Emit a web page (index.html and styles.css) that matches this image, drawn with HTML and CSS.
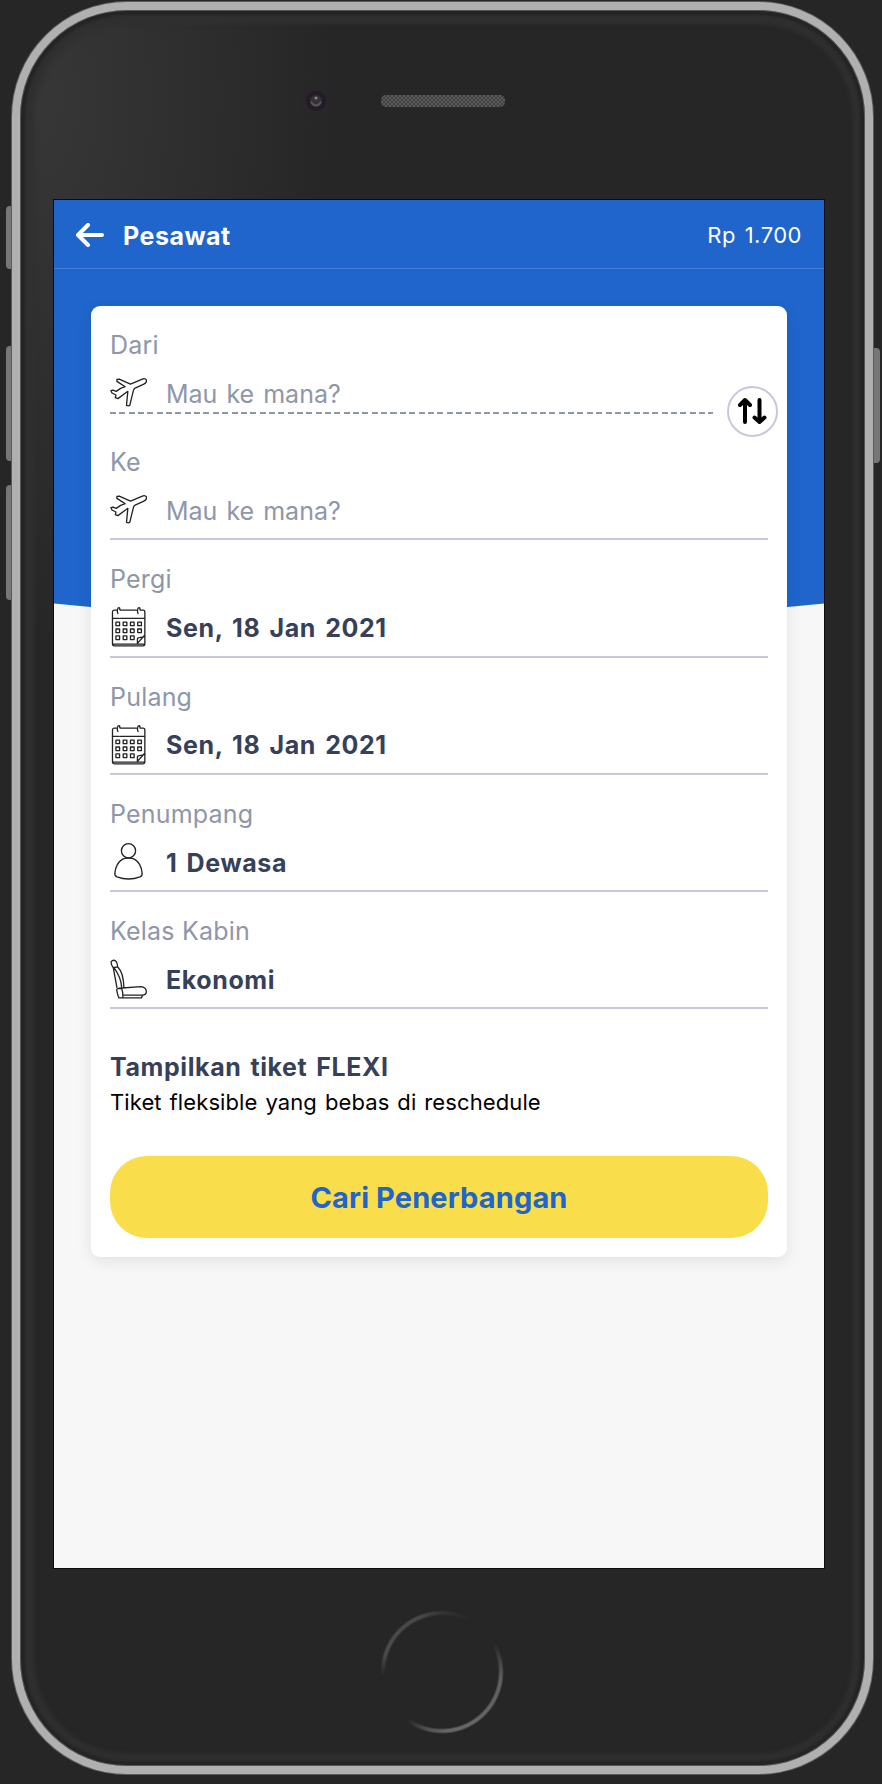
FILE: index.html
```html
<!DOCTYPE html>
<html lang="id">
<head>
<meta charset="utf-8">
<title>Pesawat</title>
<link rel="stylesheet" href="styles.css">
</head>
<body>
<svg class="symbols" aria-hidden="true">
  <symbol id="plane" viewBox="59 181 112 114">
    <path d="M157 199C164 196 170 199 169.500 205C169 210 165 213 160 215L135 226Q131 229 130 233L119 278Q114 282 109 278L113 236L83 258L75 255L77 247L65 241L62 234L68 232L78 236L91 227L105 222L80 206L80 200L87 199L121 214Z"/>
  </symbol>
  <symbol id="calendar" viewBox="59 532 112 120">
    <path d="M79 541H71Q66.500 541 66.500 547V643Q66.500 649 72 649H159Q164.500 649 164.500 643V547Q164.500 541 159 541H151M91 541H139M66 566H87M91 566H165M67 644H140L164 617M142 643V629Q142 624 148 624L161 622M140 644H164M83 551Q80 545 82 538Q83 533 88 534L89 540M144 551Q141 545 143 538Q144 533 149 534L150 540"/>
    <path d="M77 577h11v11h-11zM99 577h11v11h-11zM121 577h11v11h-11zM143 577h11v11h-11zM77 598h11v11h-11zM99 598h11v11h-11zM121 598h11v11h-11zM143 598h11v11h-11zM77 619h11v11h-11zM99 619h11v11h-11zM121 619h11v11h-11z"/>
  </symbol>
  <symbol id="person" viewBox="59 458 112 116">
    <circle cx="115" cy="482" r="21.500"/>
    <path d="M74 548Q77 520 96 508Q102 504 115 504Q128 504 134 508Q153 520 156 548Q158 557 150 561Q115 574 80 561Q72 557 74 548Z"/>
  </symbol>
  <symbol id="seat" viewBox="59 806 112 118">
    <path d="M62 813Q69 805 77 811Q82 818 82 828L69 831Q62 822 62 813ZM69 831L80 890M82 828Q100 846 101 890M72 832Q92 860 94 888M86 893L152 888Q169 890 169 903Q169 914 156 914H98M82 894H94Q98 900 98 922H86Q82 915 80 902Q78 895 82 894ZM86 922H154L158 914"/>
  </symbol>
</svg>

<div class="phone">
  <span class="side-button mute"></span>
  <span class="side-button volume-up"></span>
  <span class="side-button volume-down"></span>
  <span class="side-button power"></span>

  <div class="bezel-top">
    <svg class="camera" viewBox="0 0 40 40"><circle cx="20" cy="20" r="15" fill="#29252b"/><circle cx="20" cy="20" r="10" fill="#211d24"/><circle cx="20" cy="20" r="6" fill="#353237"/><circle cx="20" cy="17" r="1.500" fill="#888"/><path d="M15 21Q20 28 25 21" fill="none" stroke="#59565b" stroke-width="2"/></svg>
    <span class="speaker"></span>
  </div>

  <main class="screen">
    <header class="app-bar">
      <svg class="back" viewBox="0 0 28 24"><path d="M12 2L2 12L12 22M2.500 12H26"/></svg>
      <h1>Pesawat</h1>
      <span class="balance">Rp 1.700</span>
    </header>
    <form class="card">
      <div class="field from">
        <span class="label">Dari</span>
        <div class="value placeholder"><svg class="icon plane"><use href="#plane"/></svg><span>Mau ke mana?</span></div>
      </div>
      <button class="swap" type="button" aria-label="Tukar"><svg viewBox="0 0 30 28"><path d="M8 25V3M3 8L8 3L13 8M22.500 3V25M17.500 20.500L22.500 25L27.500 20.500"/></svg></button>
      <div class="field">
        <span class="label">Ke</span>
        <div class="value placeholder"><svg class="icon plane"><use href="#plane"/></svg><span>Mau ke mana?</span></div>
      </div>
      <div class="field">
        <span class="label">Pergi</span>
        <div class="value"><svg class="icon"><use href="#calendar"/></svg><span>Sen, 18 Jan 2021</span></div>
      </div>
      <div class="field">
        <span class="label">Pulang</span>
        <div class="value"><svg class="icon"><use href="#calendar"/></svg><span>Sen, 18 Jan 2021</span></div>
      </div>
      <div class="field">
        <span class="label">Penumpang</span>
        <div class="value"><svg class="icon"><use href="#person"/></svg><span>1 Dewasa</span></div>
      </div>
      <div class="field">
        <span class="label">Kelas Kabin</span>
        <div class="value"><svg class="icon"><use href="#seat"/></svg><span>Ekonomi</span></div>
      </div>
      <div class="flexi">
        <strong>Tampilkan tiket FLEXI</strong>
        <p>Tiket fleksible yang bebas di reschedule</p>
      </div>
      <button class="submit" type="button">Cari Penerbangan</button>
    </form>
  </main>
  <div class="bezel-bottom"><span class="home"></span></div>
</div>
</body>
</html>
```
FILE: styles.css
```css
* { box-sizing: border-box; }
body {
  margin: 0;
  height: 1784px;
  padding: 2px 0 0 12px;
  background: #262626;
  overflow: hidden;
  font-family: Inter, "Liberation Sans", sans-serif;
}
.symbols { position: absolute; width: 0; height: 0; }

/* Device */
.phone {
  position: relative;
  width: 861px;
  height: 1772px;
  border: 8px solid #b0b0b0;
  border-radius: 115px;
  padding-left: 34px;
  background:
    radial-gradient(ellipse 300px 560px at 15px 90px, #373737, rgba(38, 38, 38, 0)),
    #262626;
  box-shadow: inset 0 0 0 1px #555, inset 0 0 3px 5px #242424, inset 1px 1px 5px 13px #303030, 0 0 0 1px #5a5a5a;
}
.side-button {
  position: absolute;
  left: -14px;
  width: 6px;
  background: #777;
  border-radius: 4px 0 0 4px;
  z-index: -1;
}
.mute { top: 196px; height: 63px; }
.volume-up { top: 336px; height: 115px; }
.volume-down { top: 475px; height: 115px; }
.power { left: auto; right: -15px; top: 338px; height: 115px; border-radius: 0 4px 4px 0; }
.bezel-top { height: 190px; display: flex; padding: 71px 0 0 242px; }
.camera { width: 40px; height: 40px; }
.speaker {
  width: 124px;
  height: 12px;
  margin: 14px 0 0 45px;
  border-radius: 5px;
  background: repeating-conic-gradient(#5c5c5c 0 25%, #404040 0 50%) 0 0 / 4px 4px;
}
.bezel-bottom { padding: 42px 0 0 326px; }
.home {
  display: block;
  width: 124px;
  height: 124px;
  border-radius: 50%;
  background: conic-gradient(from 0deg, #333, #262626 8% 17%, #606060 27%, #686868 48%, #505050 54%, #262626 60% 74%, #4b4b4b 80%, #484848 94%, #333);
  -webkit-mask: radial-gradient(circle, transparent 56px, #000 58px 60px, transparent 62px);
  mask: radial-gradient(circle, transparent 56px, #000 58px 60px, transparent 62px);
}

/* Screen */
.screen {
  position: relative;
  isolation: isolate;
  width: 770px;
  height: 1368px;
  background: #f7f7f7;
  box-shadow: 0 0 0 1px #0c0c0c;
}
.screen::before {
  content: "";
  position: absolute;
  inset: 0 0 auto;
  height: 440px;
  background: #2065cc;
  clip-path: polygon(0 0, 100% 0, 100% 403.500px, 50% 440px, 0 403.500px);
  z-index: -1;
}
.app-bar {
  display: flex;
  align-items: center;
  height: 69px;
  padding: 0 22px;
  border-bottom: 1px solid #477fd4;
  color: #fff;
}
.back { width: 28px; height: 24px; margin-top: 1px; fill: none; stroke: #fff; stroke-width: 4; stroke-linecap: round; stroke-linejoin: round; }
h1 { margin: 3px 0 0 19px; font-size: 25px; font-weight: 700; letter-spacing: .5px; }
.balance { margin: 2px 0 0 auto; font-size: 22px; letter-spacing: .5px; word-spacing: 2px; }
.card {
  position: relative;
  width: 696px;
  height: 951px;
  margin: 37px 0 0 37px;
  padding: 0 19px;
  border-radius: 9px;
  background: #fff;
  box-shadow: 0 4px 16px rgba(0, 0, 0, .09);
}
.field { height: 117.200px; padding-top: 23px; border-bottom: 2px solid #c5c9db; }
.label { display: block; height: 32px; margin-bottom: 12px; font-size: 25px; line-height: 33px; letter-spacing: .2px; color: #8e96aa; }
.value { display: flex; align-items: center; gap: 19px; height: 40px; font-size: 25px; font-weight: 700; letter-spacing: .6px; word-spacing: 2.700px; color: #374059; }
.value span { padding-top: 1.500px; }
.placeholder { font-weight: 400; color: #8e96aa; letter-spacing: 0; word-spacing: 2px; }
.icon { flex: none; width: 37px; height: 40px; fill: none; stroke: #222; stroke-width: 4; stroke-linejoin: round; stroke-linecap: round; }
.plane { margin-top: -2px; }
.from { height: 107.500px; width: 603px; margin-bottom: 9.700px; border-bottom: 0; background: repeating-linear-gradient(90deg, #8e96aa 0 6px, transparent 6px 9.350px) left bottom / 100% 2px no-repeat; }
.swap {
  position: absolute;
  right: 9px;
  top: 80px;
  display: grid;
  place-items: center;
  width: 51px;
  height: 51px;
  padding: 0 1px 1px 0;
  border: 2px solid #c5c9db;
  border-radius: 50%;
  background: #fff;
}
.swap svg { width: 30px; height: 28px; fill: none; stroke: #000; stroke-width: 4; stroke-linecap: round; stroke-linejoin: round; }
.flexi { padding-top: 40px; color: #000; }
.flexi strong { display: block; font-size: 25px; line-height: 36px; letter-spacing: .6px; word-spacing: 2.400px; color: #374059; }
.flexi p { margin: 1px 0 0; font-size: 22px; line-height: 32px; letter-spacing: .1px; word-spacing: 1.700px; }
.submit {
  width: 658px;
  height: 82px;
  margin-top: 38px;
  border: 0;
  border-radius: 37px;
  background: #f9dd4a;
  color: #2065cc;
  font: 700 29px Inter, "Liberation Sans", sans-serif;
  letter-spacing: .12px;
}
```
